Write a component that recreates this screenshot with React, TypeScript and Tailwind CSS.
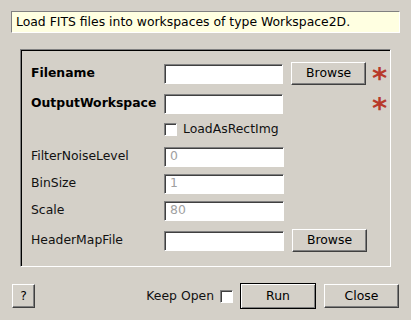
import React from 'react'

const font = { fontFamily: '"DejaVu Sans", Verdana, sans-serif' }

function Field({ value, disabled }: { value?: string; disabled?: boolean }) {
  return (
    <div className="w-[120px] h-[20px] bg-white border-t border-l border-[#808080] border-b border-r border-b-white border-r-white shadow-[inset_1px_1px_0_#404040] flex items-center pl-[5px] text-[12.4px] text-[#a0a0a0] leading-none">
      {disabled ? value : null}
    </div>
  )
}

function Button({ label, className = '', isDefault = false }: { label: string; className?: string; isDefault?: boolean }) {
  return (
    <div
      className={
        'flex items-center justify-center bg-[#d4d0c8] text-[12.4px] text-black leading-none ' +
        (isDefault
          ? 'border border-black shadow-[inset_1px_1px_0_#fff,inset_-1px_-1px_0_#808080] '
          : 'border-t border-l border-white border-b border-r border-b-[#404040] border-r-[#404040] shadow-[inset_-1px_-1px_0_#808080] ') +
        className
      }
    >
      {label}
    </div>
  )
}

function Check() {
  return (
    <div className="w-[13px] h-[13px] bg-white border-t border-l border-[#808080] border-b border-r border-b-white border-r-white shadow-[inset_1px_1px_0_#404040]" />
  )
}

function Star() {
  return (
    <div className="w-[18px] h-[20px] ml-[6px] relative">
      <span
        className="absolute left-0 top-[5px] text-[29px] font-bold text-[#b83a2b] leading-[18px]"
        style={font}
      >
        *
      </span>
    </div>
  )
}

function Row({ label, bold, children, className = '' }: { label: string; bold?: boolean; children: React.ReactNode; className?: string }) {
  return (
    <div className={'flex items-center h-[23px] ' + className}>
      <div className={'w-[133px] text-[12.4px] ' + (bold ? 'font-bold text-black' : 'text-[#111]')}>{label}</div>
      {children}
    </div>
  )
}

export default function App() {
  return (
    <div className="w-[411px] h-[320px] bg-[#d4d0c8] pt-[11px] overflow-hidden" style={font}>
      <div className="ml-[11px] w-[389px] h-[22px] bg-[#ffffe1] border-t border-l border-[#808080] border-b border-r border-b-white border-r-white flex items-center pl-[4px] text-[12.4px] text-black">
        Load FITS files into workspaces of type Workspace2D.
      </div>

      <div className="mt-[16px] ml-[20px] w-[371px] h-[218px] border-t border-l border-[#808080] border-b border-r border-b-white border-r-white shadow-[inset_1px_1px_0_#000] pt-[12px] pl-[10px]">
        <Row label="Filename" bold>
          <Field />
          <Button label="Browse" className="ml-[8px] w-[75px] h-[23px]" />
          <Star />
        </Row>
        <Row label="OutputWorkspace" bold className="mt-[7px]">
          <Field />
          <div className="w-[83px]" />
          <Star />
        </Row>
        <div className="flex items-center h-[23px] mt-[3px] pl-[133px]">
          <Check />
          <span className="ml-[6px] text-[12.4px] text-[#111]">LoadAsRectImg</span>
        </div>
        <Row label="FilterNoiseLevel" className="mt-[4px]">
          <Field value="0" disabled />
        </Row>
        <Row label="BinSize" className="mt-[4px]">
          <Field value="1" disabled />
        </Row>
        <Row label="Scale" className="mt-[4px]">
          <Field value="80" disabled />
        </Row>
        <Row label="HeaderMapFile" className="mt-[7px]">
          <Field />
          <Button label="Browse" className="ml-[8px] w-[75px] h-[23px]" />
        </Row>
      </div>

      <div className="mt-[16px] flex items-center px-[12px] h-[26px]">
        <Button label="?" className="w-[23px] h-[24px]" />
        <div className="flex-1" />
        <span className="text-[12.4px] text-[#111]">Keep Open</span>
        <div className="ml-[6px]">
          <Check />
        </div>
        <Button label="Run" isDefault className="ml-[7px] w-[76px] h-[26px]" />
        <Button label="Close" className="ml-[8px] w-[75px] h-[24px]" />
      </div>
    </div>
  )
}
